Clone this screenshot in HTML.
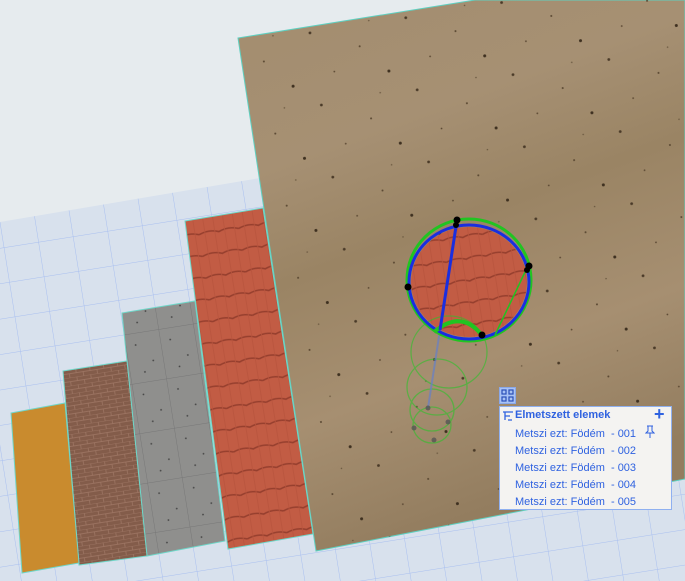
<!DOCTYPE html>
<html><head><meta charset="utf-8"><style>
html,body{margin:0;padding:0;width:685px;height:581px;overflow:hidden;background:#e6ebee;font-family:"Liberation Sans",sans-serif}
svg{position:absolute;left:0;top:0}
.pop{position:absolute;left:499px;top:406px;width:171px;height:102px;background:#f4f3f1;border:1px solid #8fb0f0;}
.pop div{position:absolute;font-size:11px;color:#2f62e0;white-space:nowrap}
.ic{position:absolute;left:499px;top:387px;width:17px;height:17px;background:#a8c2f5;border:1px solid #8aa8e8;box-sizing:border-box}
</style></head><body>
<svg width="685" height="581" viewBox="0 0 685 581">
<defs>
<pattern id="g" width="35" height="35" patternUnits="userSpaceOnUse" patternTransform="rotate(-9)">
<rect width="35" height="35" fill="#d8e1ed"/>
<path d="M0 0H35M0 0V35" stroke="#a9bff0" stroke-width="1"/>
</pattern>
<linearGradient id="w" x1="0" y1="0" x2="0.3" y2="1">
<stop offset="0" stop-color="#a38d6f"/><stop offset="0.3" stop-color="#a69073"/><stop offset="0.5" stop-color="#9a8464"/><stop offset="0.75" stop-color="#a68f71"/><stop offset="1" stop-color="#937d5f"/>
</linearGradient>
<pattern id="t" width="40" height="22" patternUnits="userSpaceOnUse" patternTransform="rotate(-9)">
<rect width="40" height="22" fill="#c25c44"/>
<path d="M0 21 Q10 17 20 21 Q30 17 40 21" stroke="#963f2e" stroke-width="1.6" fill="none"/>
<path d="M6 0V22M16 0V22M26 0V22M36 0V22" stroke="#b8543d" stroke-width="0.8"/>
</pattern>
<pattern id="b" width="14" height="8" patternUnits="userSpaceOnUse" patternTransform="rotate(-9)">
<rect width="14" height="8" fill="#835c4a"/>
<path d="M0 0H14M0 4H14M3 0V4M10 4V8" stroke="#a07866" stroke-width="0.7"/>
</pattern>
<pattern id="c" width="35" height="50" patternUnits="userSpaceOnUse" patternTransform="rotate(-9)">
<rect width="35" height="50" fill="#8f8f8d"/>
<path d="M0 0H35M0 0V50" stroke="#777" stroke-width="1"/>
<circle cx="10" cy="12" r="0.9" fill="#444"/><circle cx="25" cy="30" r="0.9" fill="#444"/><circle cx="15" cy="40" r="0.9" fill="#444"/>
</pattern>
<pattern id="d" width="97" height="73" patternUnits="userSpaceOnUse" patternTransform="rotate(-9)">
<circle cx="10" cy="8" r="1.4" fill="#4a3a28"/><circle cx="57" cy="29" r="1" fill="#5a4832"/><circle cx="82" cy="58" r="1.5" fill="#3e3020"/><circle cx="28" cy="50" r="0.9" fill="#5a4832"/><circle cx="70" cy="5" r="0.8" fill="#6a5840"/>
</pattern>
</defs>
<polygon points="0,222 260,178 685,100 685,581 0,581" fill="url(#g)"/>
<polygon points="238,38 475,0 685,0 685,479 316,551" fill="url(#w)" stroke="#5fd0c0" stroke-width="1"/>
<polygon points="238,38 475,0 685,0 685,479 316,551" fill="url(#d)"/>
<polygon points="185,221 263,208 313,534 228,549" fill="url(#t)" stroke="#6fd6c8" stroke-width="1"/>
<polygon points="122,313 195,301 225,541 147,556" fill="url(#c)" stroke="#6fd6c8" stroke-width="1"/>
<polygon points="63,371 127,361 147,556 79,565" fill="url(#b)" stroke="#6fd6c8" stroke-width="1"/>
<polygon points="11,413 65,403 79,563 22,573" fill="#c98b2e" stroke="#6fd6c8" stroke-width="1"/>
<ellipse cx="469" cy="282" rx="58" ry="55" fill="url(#t)"/>
<g fill="none" stroke="#2ec22a" stroke-width="1.3" opacity="0.6">
<ellipse cx="449" cy="352" rx="38" ry="36"/>
<ellipse cx="437" cy="387" rx="30" ry="28"/>
<ellipse cx="432" cy="410" rx="22" ry="21"/>
<ellipse cx="432" cy="425" rx="19" ry="18"/>
</g>
<line x1="440" y1="330" x2="428" y2="408" stroke="#6680c8" stroke-width="2" opacity="0.7"/>
<ellipse cx="469" cy="280" rx="62" ry="61" fill="none" stroke="#21c421" stroke-width="3"/>
<ellipse cx="469" cy="282" rx="60" ry="57" fill="none" stroke="#1a2ee0" stroke-width="3"/>
<path d="M434 332 Q460 310 480 333" stroke="#21c421" stroke-width="4" fill="none"/>
<path d="M526 270 L495 335" stroke="#21c421" stroke-width="1.5"/>
<line x1="457" y1="220" x2="440" y2="330" stroke="#1a2ee0" stroke-width="3"/>
<g fill="#000"><circle cx="457" cy="220" r="3.5"/><circle cx="456" cy="225" r="3"/><circle cx="529" cy="266" r="3.5"/><circle cx="527" cy="270" r="3"/><circle cx="408" cy="287" r="3.5"/><circle cx="482" cy="335" r="3.5"/></g>
<g fill="#555" opacity="0.8"><circle cx="428" cy="408" r="2.5"/><circle cx="448" cy="422" r="2.5"/><circle cx="414" cy="428" r="2.5"/><circle cx="434" cy="440" r="2.5"/></g>
</svg>
<div class="ic"><svg width="15" height="15" viewBox="0 0 15 15" style="position:absolute;left:0;top:0"><g fill="none" stroke="#2a4fb8" stroke-width="1.2"><rect x="2" y="2" width="4" height="4"/><rect x="9" y="2" width="4" height="4"/><rect x="2" y="9" width="4" height="4"/><rect x="9" y="9" width="4" height="4"/></g></svg></div>
<div class="pop">
<svg width="12" height="12" viewBox="0 0 12 12" style="position:absolute;left:2px;top:3px"><g fill="none" stroke="#2f62e0" stroke-width="1.3"><path d="M1 2H11M3 2V10M3 6H8M6 10H10"/></g></svg>
<div style="left:15px;top:2px;font-weight:bold;font-size:11px">Elmetszett elemek</div>
<div style="left:154px;top:-3px;font-size:18px;font-weight:bold">+</div>
<svg width="10" height="14" viewBox="0 0 10 14" style="position:absolute;left:145px;top:18px"><g fill="none" stroke="#2f62e0" stroke-width="1"><path d="M2 1H8M3 1V6L1 8H9L7 6V1M5 8V13"/></g></svg>
<div style="left:15px;top:21px">Metszi ezt: Födém&nbsp; - 001</div>
<div style="left:15px;top:38px">Metszi ezt: Födém&nbsp; - 002</div>
<div style="left:15px;top:55px">Metszi ezt: Födém&nbsp; - 003</div>
<div style="left:15px;top:72px">Metszi ezt: Födém&nbsp; - 004</div>
<div style="left:15px;top:89px">Metszi ezt: Födém&nbsp; - 005</div>
</div>
</body></html>
